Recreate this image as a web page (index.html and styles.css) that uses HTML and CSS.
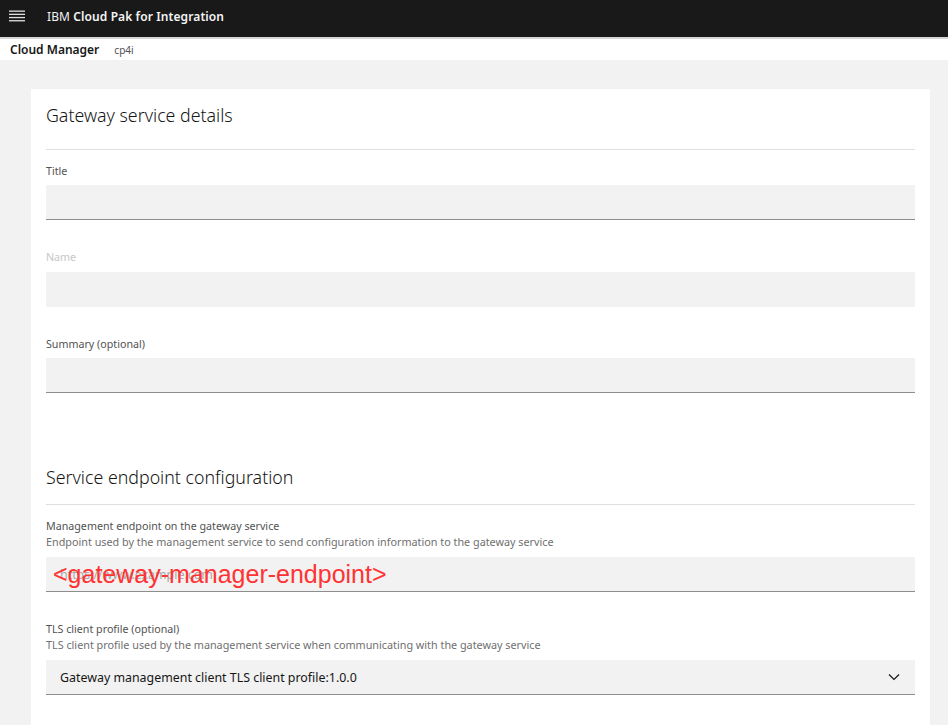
FILE: index.html
```html
<!DOCTYPE html>
<html lang="en">
<head>
<meta charset="utf-8">
<title>Cloud Manager</title>
<link rel="stylesheet" href="styles.css">
</head>
<body>
<header class="topbar">
  <span class="menu-icon" aria-hidden="true">
    <svg width="16" height="12" viewBox="0 0 16 12"><rect x="0" y="0.5" width="16" height="1.3" fill="#e0e0e0"/><rect x="0" y="3.7" width="16" height="1.3" fill="#e0e0e0"/><rect x="0" y="6.9" width="16" height="1.3" fill="#e0e0e0"/><rect x="0" y="10.1" width="16" height="1.3" fill="#e0e0e0"/></svg>
  </span>
  <span class="brand"><span class="brand-ibm">IBM</span> <strong>Cloud Pak for Integration</strong></span>
</header>
<div class="subbar">
  <span class="app-name">Cloud Manager</span>
  <span class="app-org">cp4i</span>
</div>
<main class="page">
  <section class="card">
    <h2 class="section-title first">Gateway service details</h2>
    <div class="field">
      <label class="label">Title</label>
      <div class="input"></div>
    </div>
    <div class="field">
      <label class="label disabled">Name</label>
      <div class="input no-border"></div>
    </div>
    <div class="field">
      <label class="label">Summary (optional)</label>
      <div class="input"></div>
    </div>

    <h2 class="section-title second">Service endpoint configuration</h2>
    <div class="field">
      <label class="label">Management endpoint on the gateway service</label>
      <div class="helper">Endpoint used by the management service to send configuration information to the gateway service</div>
      <div class="input with-overlay">
        <span class="placeholder">https://www.example.com</span>
        <span class="overlay">&lt;gateway-manager-endpoint&gt;</span>
      </div>
    </div>
    <div class="field">
      <label class="label">TLS client profile (optional)</label>
      <div class="helper">TLS client profile used by the management service when communicating with the gateway service</div>
      <div class="input select">
        <span class="select-value">Gateway management client TLS client profile:1.0.0</span>
        <svg class="chevron" width="12" height="8" viewBox="0 0 12 8"><path d="M1 1.5 L6 6.5 L11 1.5" fill="none" stroke="#161616" stroke-width="1.2"/></svg>
      </div>
    </div>
  </section>
</main>
</body>
</html>
```
FILE: styles.css
```css
* { box-sizing: border-box; }
html, body { margin: 0; padding: 0; }
body {
  font-family: "Noto Sans", "Liberation Sans", sans-serif;
  background: #f2f2f2;
  color: #161616;
  height: 725px;
  overflow: hidden;
}
.topbar {
  height: 37px;
  background: #191919;
  display: flex;
  align-items: center;
  padding-left: 9px;
  padding-bottom: 5px;
}
.menu-icon { display: flex; width: 16px; height: 12px; margin-right: 22px; }
.brand { color: #f4f4f4; font-size: 12px; letter-spacing: 0.1px; }
.brand-ibm { font-weight: 400; }
.brand strong { font-weight: 600; }
.subbar {
  height: 23px;
  background: #fff;
  border-top: 2px solid #d6d6d6;
  display: flex;
  align-items: center;
  padding-left: 10px;
}
.app-name { font-size: 12px; font-weight: 600; margin-right: 15px; }
.app-org { font-size: 10px; color: #525252; }
.page {
  padding: 29px 18px 0 31px;
}
.card {
  background: #fff;
  padding: 0 15px 0 15px;
  height: 636px;
  overflow: hidden;
}
.section-title {
  margin: 0;
  font-size: 17.8px;
  font-weight: 300;
  line-height: 26px;
  border-bottom: 1px solid #e0e0e0;
  color: #161616;
}
.section-title.first { padding-top: 13px; padding-bottom: 21px; }
.section-title.second { margin-top: 71px; padding-bottom: 14px; }
.field {
  display: flex;
  flex-direction: column;
  margin-top: 13px;
}
.field + .field { margin-top: 29px; }
.label {
  font-size: 10.7px;
  line-height: 16px;
  color: #525252;
  margin-bottom: 6px;
}
.label.disabled { color: #c6c6c6; margin-bottom: 7px; }
.helper {
  font-size: 10.8px;
  line-height: 16px;
  color: #6f6f6f;
  margin-top: -6px;
  margin-bottom: 7px;
}
.input {
  height: 35px;
  flex: none;
  background: #f2f2f2;
  border-bottom: 1px solid #8d8d8d;
  position: relative;
  display: flex;
  align-items: center;
  padding: 0 14px;
}
.input.no-border { border-bottom-color: transparent; }
.placeholder { font-size: 12.4px; color: #a8a8a8; }
.overlay {
  position: absolute;
  left: 7px;
  top: 3px;
  font-family: "Liberation Sans", Arial, sans-serif;
  font-size: 25px;
  line-height: 28px;
  color: #ff3333;
}
.select { justify-content: space-between; padding-right: 15px; }
.select-value { font-size: 12.4px; color: #161616; }
```
